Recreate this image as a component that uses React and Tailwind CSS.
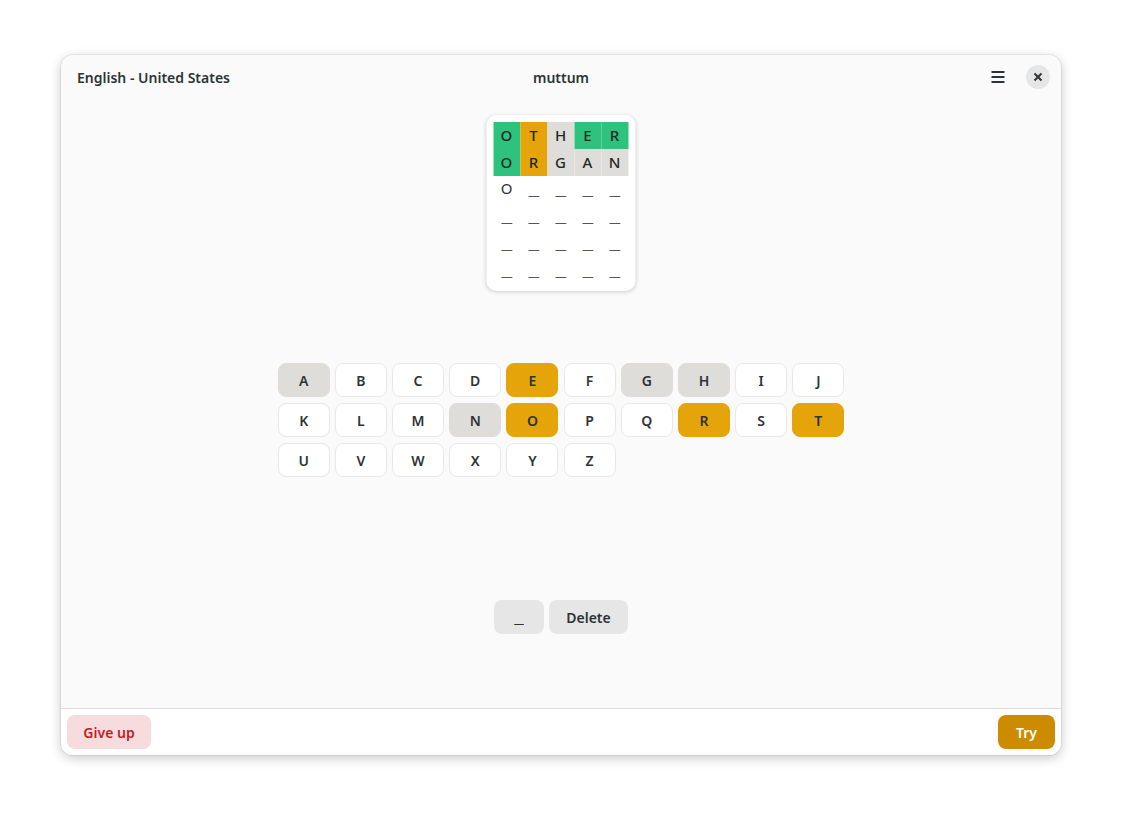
import { useState } from "react";

const GREEN = "bg-[#2ec27e]";
const YELLOW = "bg-[#e5a50a]";
const GRAY = "bg-[#deddda]";

// Past guesses with their per-letter result
const guesses = [
  [
    ["O", "hit"],
    ["T", "near"],
    ["H", "miss"],
    ["E", "hit"],
    ["R", "hit"],
  ],
  [
    ["O", "hit"],
    ["R", "near"],
    ["G", "miss"],
    ["A", "miss"],
    ["N", "miss"],
  ],
];

const cellBg = { hit: GREEN, near: YELLOW, miss: GRAY };

const keyRows = [
  ["A", "B", "C", "D", "E", "F", "G", "H", "I", "J"],
  ["K", "L", "M", "N", "O", "P", "Q", "R", "S", "T"],
  ["U", "V", "W", "X", "Y", "Z"],
];

const keyState = {
  A: "miss",
  G: "miss",
  H: "miss",
  N: "miss",
  E: "near",
  O: "near",
  R: "near",
  T: "near",
};

// placeholder for an empty slot, drawn wider than the font's own underscore
const Blank = ({ className = "text-[#555753]" }) => (
  <span className={`inline-block scale-x-[1.6] ${className}`}>_</span>
);

const Board = ({ current }) => {
  const empty = 6 - guesses.length - 1;
  return (
    <div className="bg-white rounded-[10px] shadow-[0_1px_4px_rgba(0,0,0,0.18)] p-[7px]">
      {guesses.map((row, i) => (
        <div key={i} className="flex">
          {row.map(([ch, st], j) => (
            <div
              key={j}
              className={`w-[27px] h-[27px] flex items-center justify-center text-[15px] font-medium text-[#1e2a24] ${cellBg[st]}`}
            >
              {ch}
            </div>
          ))}
        </div>
      ))}
      <div className="flex">
        {current.map((ch, j) => (
          <div
            key={j}
            className={`w-[27px] h-[27px] flex justify-center text-[15px] text-[#2e3436] ${
              ch ? "items-start pt-[1px]" : "items-center"
            }`}
          >
            {ch || <Blank />}
          </div>
        ))}
      </div>
      {Array.from({ length: empty }).map((_, i) => (
        <div key={i} className="flex">
          {Array.from({ length: 5 }).map((_, j) => (
            <div
              key={j}
              className="w-[27px] h-[27px] flex items-center justify-center text-[15px]"
            >
              <Blank />
            </div>
          ))}
        </div>
      ))}
    </div>
  );
};

const Key = ({ letter, onPress }) => {
  const st = keyState[letter];
  const style =
    st === "near"
      ? `${YELLOW} border-[#e5a50a]`
      : st === "miss"
      ? `${GRAY} border-[#deddda]`
      : "bg-white border-[#e8e8e7]";
  return (
    <button
      onClick={() => onPress(letter)}
      className={`w-[52px] h-[34px] rounded-[8px] border text-[14px] font-semibold text-[#2e3436] flex items-center justify-center ${style}`}
    >
      {letter}
    </button>
  );
};

export default function App() {
  const [current, setCurrent] = useState(["O", "", "", "", ""]);

  const press = (ch) => {
    const idx = current.findIndex((c) => !c);
    if (idx === -1) return;
    const next = [...current];
    next[idx] = ch;
    setCurrent(next);
  };

  const del = () => {
    const filled = current.filter((c) => c).length;
    if (!filled) return;
    const next = [...current];
    next[filled - 1] = "";
    setCurrent(next);
  };

  return (
    <div
      className="w-[1122px] h-[822px] bg-white pt-[55px] px-[61px]"
      style={{ fontFamily: '"Noto Sans", sans-serif' }}
    >
      <div className="w-[1000px] h-[700px] rounded-[12px] bg-[#fafafa] shadow-[0_0_0_1px_rgba(0,0,0,0.06),0_3px_12px_rgba(0,0,0,0.22)] flex flex-col overflow-hidden">
        {/* Header bar */}
        <div className="h-[46px] pb-[2px] flex items-center px-[16px] relative">
          <span className="text-[14px] font-semibold text-[#2e3436]">
            English - United States
          </span>
          <span className="absolute left-1/2 -translate-x-1/2 text-[14px] font-semibold text-[#2e3436]">
            muttum
          </span>
          <div className="ml-auto flex items-center gap-[16px] mr-[-5px]">
            <button className="w-[24px] h-[24px] flex items-center justify-center">
              <svg width="16" height="16" viewBox="0 0 16 16">
                <path d="M1.5 3h13M1.5 8h13M1.5 13h13" stroke="#2e3436" strokeWidth="1.8" />
              </svg>
            </button>
            <button className="w-[24px] h-[24px] rounded-full bg-[#e6e6e6] flex items-center justify-center">
              <svg width="10" height="10" viewBox="0 0 10 10">
                <path d="M1.5 1.5l7 7M8.5 1.5l-7 7" stroke="#2e3436" strokeWidth="2" />
              </svg>
            </button>
          </div>
        </div>

        {/* Game area */}
        <div className="flex-1 flex flex-col items-center">
          <div className="mt-[14px] translate-x-[-0.5px]">
            <Board current={current} />
          </div>

          <div className="mt-[72px] flex flex-col gap-[6px]">
            {keyRows.map((row, i) => (
              <div key={i} className="flex gap-[5.2px]">
                {row.map((l) => (
                  <Key key={l} letter={l} onPress={press} />
                ))}
              </div>
            ))}
          </div>

          <div className="mt-[123px] flex gap-[5px]">
            <button className="w-[50px] h-[34px] rounded-[8px] bg-[#e6e6e6] text-[14px] font-semibold text-[#2e3436]">
              <Blank className="text-[#2e3436]" />
            </button>
            <button
              onClick={del}
              className="w-[79px] h-[34px] rounded-[8px] bg-[#e6e6e6] text-[14px] font-semibold text-[#2e3436]"
            >
              Delete
            </button>
          </div>
        </div>

        {/* Action bar */}
        <div className="h-[47px] bg-white border-t border-[#dedede] flex items-center justify-between px-[6px]">
          <button className="w-[84px] h-[34px] rounded-[8px] bg-[#f6dcdc] text-[14px] font-semibold text-[#c01c28]">
            Give up
          </button>
          <button className="w-[57px] h-[34px] rounded-[8px] bg-[#cd8b00] text-[14px] font-semibold text-white">
            Try
          </button>
        </div>
      </div>
    </div>
  );
}
